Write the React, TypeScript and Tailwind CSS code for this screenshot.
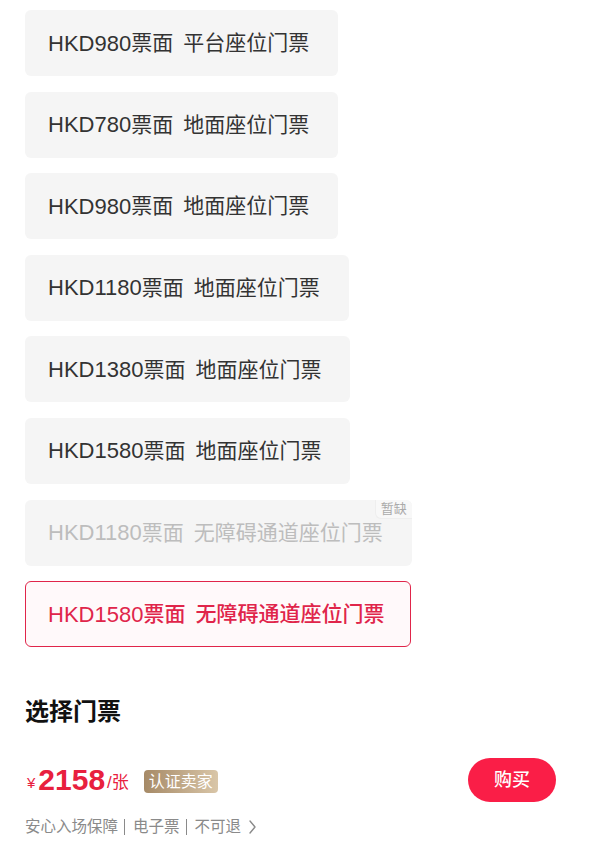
import React from 'react';

type Ticket = {
    label: string;
    status?: 'soldout' | 'selected';
};

const tickets: Ticket[] = [
    { label: 'HKD980票面 平台座位门票' },
    { label: 'HKD780票面 地面座位门票' },
    { label: 'HKD980票面 地面座位门票' },
    { label: 'HKD1180票面 地面座位门票' },
    { label: 'HKD1380票面 地面座位门票' },
    { label: 'HKD1580票面 地面座位门票' },
    { label: 'HKD1180票面 无障碍通道座位门票', status: 'soldout' },
    { label: 'HKD1580票面 无障碍通道座位门票', status: 'selected' },
];

const font = { fontFamily: '"Liberation Sans", "Noto Sans CJK SC", sans-serif' };

function Label({ text }: { text: string }) {
    // "HKD980票面 平台座位门票" -> price / 票面 / seat type
    const [price, seat] = text.split('票面 ');
    return (
        <>
            <span className="text-[22px]">{price}</span>
            <span>票面</span>
            <span className="ml-[10px]">{seat}</span>
        </>
    );
}

function TicketCard({ ticket }: { ticket: Ticket }) {
    if (ticket.status === 'selected') {
        return (
            <div className="inline-flex h-[66px] items-center self-start rounded-md border-[1.5px] border-[#e0254a] bg-[#fff9fa] pl-[22px] pr-[26px] text-[21px] font-medium text-[#e0254a]">
                <Label text={ticket.label} />
            </div>
        );
    }

    const soldOut = ticket.status === 'soldout';
    return (
        <div
            className={`relative inline-flex h-[66px] items-center self-start rounded-md bg-[#f5f5f5] pl-[23px] pr-[29px] text-[21px] ${
                soldOut ? 'text-[#bdbdbd]' : 'text-[#333333]'
            }`}
        >
            <Label text={ticket.label} />
            {soldOut && (
                <span className="absolute right-0 top-0 rounded-bl-md rounded-tr-md border-b border-l border-[#eeeeee] bg-[#f8f8f8] px-[5px] py-[1px] text-[13px] leading-[16px] text-[#aaaaaa]">
                    暂缺
                </span>
            )}
        </div>
    );
}

function Sep() {
    return <span className="ml-[6px] mr-[8px] h-[16px] w-px bg-[#8a8a8a]" />;
}

export default function App() {
    return (
        <div className="min-h-[847px] w-[600px] bg-white" style={font}>
            <div className="flex flex-col gap-[15.6px] px-[25px] pt-[10px]">
                {tickets.map((t) => (
                    <TicketCard key={t.label} ticket={t} />
                ))}
            </div>

            <h2 className="mt-[50px] px-[25px] text-[24px] font-bold leading-[30px] text-[#111111]">选择门票</h2>

            <div className="mt-[31px] flex items-center justify-between pl-[27px] pr-[44px]">
                <div className="flex items-center">
                    <span className="mt-[6px] text-[15px] font-medium text-[#e8203e]">¥</span>
                    <span className="ml-[3px] text-[30px] font-bold leading-[36px] text-[#e8203e]">2158</span>
                    <span className="ml-[2px] mt-[6px] text-[17px] text-[#e8203e]">/张</span>
                    <span className="ml-[15px] mt-[2px] rounded-[4px] bg-gradient-to-r from-[#a68a67] to-[#d9c6a8] px-[5px] text-[16px] leading-[23px] text-white">
                        认证卖家
                    </span>
                </div>
                <button className="flex h-[44px] w-[88px] items-center justify-center rounded-full bg-[#fa1e47] text-[18px] font-medium text-white">
                    购买
                </button>
            </div>

            <div className="mt-[15px] flex items-center px-[25px] text-[15.5px] leading-[20px] text-[#8a8a8a]">
                <span>安心入场保障</span>
                <Sep />
                <span>电子票</span>
                <Sep />
                <span>不可退</span>
                <svg className="ml-[7px]" width="9" height="16" viewBox="0 0 9 16" fill="none">
                    <path d="M2 2L7 8L2 14" stroke="#8a8a8a" strokeWidth="1.4" strokeLinecap="round" strokeLinejoin="round" />
                </svg>
            </div>
        </div>
    );
}
